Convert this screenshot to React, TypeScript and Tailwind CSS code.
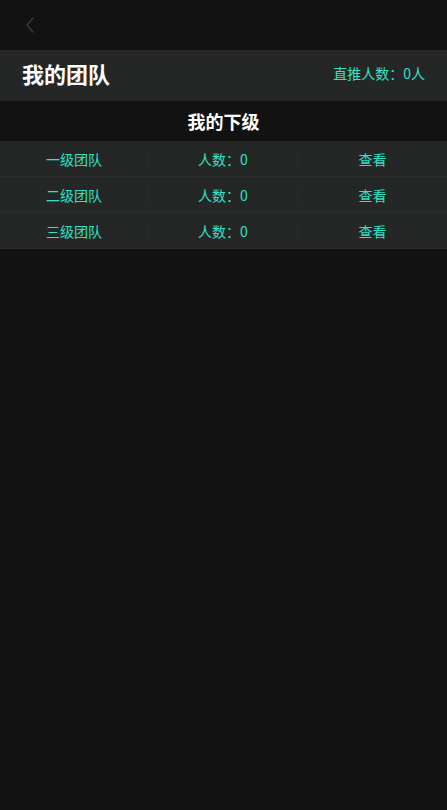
import React from 'react';

const TEAMS = [
  { name: '一级团队', count: 0 },
  { name: '二级团队', count: 0 },
  { name: '三级团队', count: 0 },
];

export default function App() {
  return (
    <div
      className="min-h-[810px] w-full bg-[#121212]"
      style={{ fontFamily: '"Noto Sans CJK SC", "Liberation Sans", sans-serif' }}
    >
      {/* Nav bar */}
      <div className="flex h-[50px] items-center px-[24px]">
        <svg width="14" height="18" viewBox="0 0 14 18" fill="none">
          <path d="M9 2 L3 9 L9 16" stroke="#3a3a3a" strokeWidth="1.4" strokeLinecap="round" strokeLinejoin="round" />
        </svg>
      </div>

      {/* Header */}
      <div className="flex h-[51px] items-center justify-between bg-[#252727] px-[22px] pb-[5px]">
        <span className="text-[22px] font-bold leading-none text-white">我的团队</span>
        <span className="text-[14px] leading-none text-[#30e2c6]">直推人数：0人</span>
      </div>

      {/* Subordinates */}
      <div className="flex h-[40px] items-center justify-center">
        <span className="text-[18px] font-bold leading-none text-white">我的下级</span>
      </div>

      <div className="bg-[#252727]">
        {TEAMS.map((t) => (
          <div
            key={t.name}
            className="grid h-[36px] grid-cols-3 items-center border-b border-[#2c2e2e] text-[14px] leading-none text-[#30e2c6]"
          >
            <div className="flex h-[14px] items-center justify-center border-r border-[#2c2e2e]">{t.name}</div>
            <div className="flex h-[14px] items-center justify-center border-r border-[#2c2e2e]">人数：{t.count}</div>
            <div className="flex h-[14px] items-center justify-center">查看</div>
          </div>
        ))}
      </div>
    </div>
  );
}
